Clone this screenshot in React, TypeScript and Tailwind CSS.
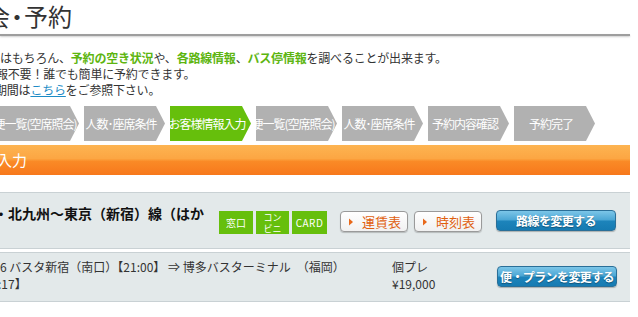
const steps = [
  { label: "便一覧(空席照会)", active: false },
  { label: "人数･座席条件", active: false },
  { label: "お客様情報入力", active: true },
  { label: "便一覧(空席照会)", active: false },
  { label: "人数･座席条件", active: false },
  { label: "予約内容確認", active: false },
  { label: "予約完了", active: false },
];

function Arrow() {
  return (
    <svg width="6" height="8" viewBox="0 0 6 8" className="shrink-0">
      <path d="M1 0.5 L5 4 L1 7.5 Z" fill="#e8681a" />
    </svg>
  );
}

function BlueButton({ label, className }: { label: string; className?: string }) {
  return (
    <div
      className={`flex h-[21px] w-[120px] items-center justify-center whitespace-nowrap rounded-[4px] border border-[#2a6f98] bg-[linear-gradient(#7cc6e8,#4aa6d4_48%,#1d84bb_52%,#167bb2)] text-[12px] font-bold tracking-[-0.6px] text-white shadow-[0_1px_1px_rgba(0,0,0,0.25)] [text-shadow:0_1px_1px_rgba(0,0,0,0.35)] ${className ?? ""}`}
    >
      {label}
    </div>
  );
}

function OrangeButton({ label }: { label: string }) {
  return (
    <div className="flex h-[21px] w-[68px] items-center gap-[8px] rounded-[4px] border border-[#9a9a9a] bg-[linear-gradient(#ffffff,#f1f1f1)] pl-[7px] text-[13px] leading-none text-[#e0600e] shadow-[0_1px_1px_rgba(0,0,0,0.2)]">
      <Arrow />
      <span>{label}</span>
    </div>
  );
}

export default function App() {
  return (
    <div className="h-[317px] w-[638px] overflow-hidden bg-white font-['Noto_Sans_CJK_JP',sans-serif] text-[#333]">
      <div className="w-[630px]">
        {/* page title */}
        <h1 className="-ml-[14px] h-[34px] whitespace-nowrap pt-[1px] text-[24px] leading-[30px] text-[#333]">
          会<span className="-mx-[5px]">・</span>予約
        </h1>
        <div className="h-[2px] bg-[#9e9e9e] shadow-[0_1px_2px_rgba(0,0,0,0.2)]" />

        {/* intro text */}
        <div className="mt-[14px] whitespace-nowrap text-[12px] leading-[16px] tracking-[-0.2px]">
          <p>
            はもちろん、<b className="text-[#5db510]">予約の空き状況</b>や、
            <b className="text-[#5db510]">各路線情報</b>、
            <b className="text-[#5db510]">バス停情報</b>を調べることが出来ます。
          </p>
          <p className="-ml-[4px]">報不要！誰でも簡単に予約できます。</p>
          <p className="-ml-[5px]">
            期間は<a className="text-[#1d8cc6] underline">こちら</a>をご参照下さい。
          </p>
        </div>

        {/* steps */}
        <div className="mt-[8px] -ml-[2px] flex h-[35px] gap-[5px]">
          {steps.map((step, index) => (
            <div
              key={index}
              className={`flex h-[35px] w-[81px] shrink-0 items-center justify-center whitespace-nowrap pr-[7px] text-[12px] tracking-[-1px] text-white [clip-path:polygon(0_0,calc(100%-9px)_0,100%_50%,calc(100%-9px)_100%,0_100%)] ${
                step.active ? "bg-[#66bf0c]" : "bg-[#b1b1b1]"
              }`}
            >
              {step.label}
            </div>
          ))}
        </div>

        {/* section bar */}
        <div className="mt-[4px] flex h-[30px] items-center bg-[linear-gradient(#fdb451,#fca643_45%,#fa8a26_55%,#f7781c)]">
          <span className="-ml-[3px] text-[15px] text-white">入力</span>
        </div>

        {/* route row */}
        <div className="mt-[17px] flex h-[57px] items-start border-y border-[#c9d1d4] bg-[#e3e9ea]">
          <div className="mt-[10px] w-[205px] overflow-hidden whitespace-nowrap text-[14px] font-bold leading-[20px] text-[#111]">
            <span className="-ml-[6px] inline-block">・北九州〜東京（新宿）線（はかた号）</span>
          </div>
          <div className="ml-[14px] mt-[18px] flex gap-[3px] text-[10px] text-white">
            <div className="flex h-[23px] w-[34px] items-center justify-center bg-[#66bf0c]">窓口</div>
            <div className="flex h-[23px] w-[33px] flex-col items-center justify-center bg-[#66bf0c] text-[9px] leading-[11px]">
              <span>コン</span>
              <span>ビニ</span>
            </div>
            <div className="flex h-[23px] w-[35px] items-center justify-center bg-[#66bf0c] tracking-[0.5px]">CARD</div>
          </div>
          <div className="ml-[13px] mt-[18px] flex gap-[6px]">
            <OrangeButton label="運賃表" />
            <OrangeButton label="時刻表" />
          </div>
          <BlueButton label="路線を変更する" className="ml-[14px] mt-[17px]" />
        </div>

        {/* trip row */}
        <div className="mt-[3px] flex h-[50px] items-start border-y border-[#c9d1d4] bg-[#e3e9ea] text-[12px] leading-[17px]">
          <div className="mt-[5px] w-[392px] whitespace-nowrap">
            <p>6 バスタ新宿（南口）【21:00】 ⇒ 博多バスターミナル　（福岡）</p>
            <p className="-ml-[2px]">:17】</p>
          </div>
          <div className="mt-[5px] w-[105px]">
            <p>個プレ</p>
            <p>¥19,000</p>
          </div>
          <BlueButton label="便・プランを変更する" className="mt-[13px]" />
        </div>
      </div>
    </div>
  );
}
